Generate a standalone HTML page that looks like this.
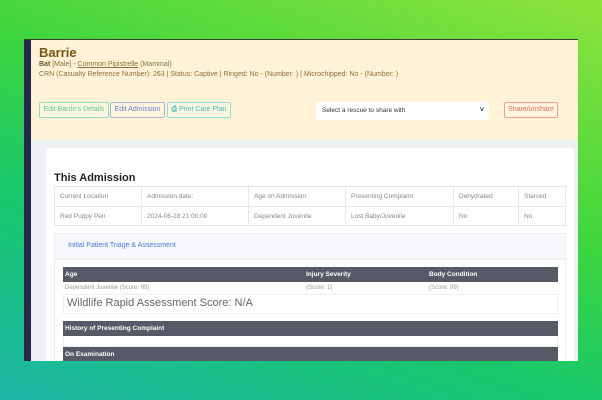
<!DOCTYPE html>
<html><head><style>
*{margin:0;padding:0;box-sizing:border-box}
body{width:602px;height:400px;overflow:hidden;font-family:"Liberation Sans",sans-serif;position:relative;
background:linear-gradient(20deg,#1cb6a6 0%,#19c86a 35%,#3fd63e 60%,#8ee33a 100%)}
.a{position:absolute}
.win{left:24px;top:39px;width:554px;height:322px;background:#eef0f4;overflow:hidden;border-top:1px solid #3a3f36}
.strip{left:0;top:0;width:7px;height:322px;background:#262a4a}
.hdr{left:7px;top:0;width:547px;height:100px;background:#fff2d6}
.t{font-size:7px;color:#8a7040;white-space:nowrap}
.btn{height:16px;border:1px solid #8fdcb8;border-radius:2px;font-size:7px;line-height:14px;text-align:center;color:#5cc9a0;background:#fff5e0;white-space:nowrap}
.card{left:22px;top:108px;width:528px;height:220px;background:#fff;border-radius:3px}
table{border-collapse:collapse;font-size:6.5px;color:#888}
td{border:1px solid #e8e8ec;padding:0 5px;white-space:nowrap}
.dk{background:#555a66;color:#fff;font-weight:bold;font-size:6.5px;padding-left:2px;line-height:15px}
</style></head><body>
<div class="a win">
 <div class="a strip"></div>
 <div class="a hdr">
  <div class="a" style="left:8px;top:5px;font-size:13px;font-weight:bold;color:#7a5518">Barrie</div>
  <div class="a t" style="left:8px;top:21px"><b style="color:#6a5528">Bat</b> [Male] - <u>Common Pipistrelle</u> (Mammal)</div>
  <div class="a t" style="left:8px;top:31px">CRN (Casualty Reference Number): 263 | Status: Captive | Ringed: No - (Number: ) | Microchipped: No - (Number: )</div>
  <div class="a btn" style="left:8px;top:62px;width:70px">Edit Barrie's Details</div>
  <div class="a btn" style="left:79px;top:62px;width:55px;border-color:#a8b4d0;color:#6a80c0">Edit Admission</div>
  <div class="a btn" style="left:136px;top:62px;width:64px;border-color:#8fdcd0;color:#3cbcc0"><b>&#9113;</b> Print Care Plan</div>
  <div class="a" style="left:285px;top:62px;width:173px;height:18px;background:#fff;border-radius:3px;font-size:6.5px;line-height:18px;padding-left:6px;color:#333">Select a rescue to share with<span style="position:absolute;right:5px;top:0;font-size:7px;font-weight:bold">&#709;</span></div>
  <div class="a btn" style="left:473px;top:62px;width:54px;border-color:#f0a090;color:#f06a5a">Share/unshare</div>
 </div>
 <div class="a card">
  <div class="a" style="left:8px;top:24px;font-size:11px;font-weight:bold;color:#222">This Admission</div>
  <table class="a" style="left:8px;top:38px;width:512px">
   <tr style="height:20px"><td style="width:87px">Current Location</td><td style="width:107px">Admission date:</td><td style="width:97px">Age on Admission:</td><td style="width:108px">Presenting Complaint</td><td style="width:65px">Dehydrated</td><td>Starved</td></tr>
   <tr style="height:19px"><td>Red Puppy Pen</td><td>2024-06-28 21:00:00</td><td>Dependent Juvenile</td><td>Lost Baby/Juvenile</td><td>No</td><td>No</td></tr>
  </table>
  <div class="a" style="left:8px;top:85px;width:512px;height:140px;border:1px solid #eceef2">
   <div style="height:26px;background:#f7f8fb;border-bottom:1px solid #eceef2;font-size:7px;color:#4a78d8;padding:8px 0 0 13px">Initial Patient Triage &amp; Assessment</div>
   <div class="a" style="left:8px;top:33px;width:495px">
    <div class="dk" style="position:relative">Age<span class="a" style="left:243px">Injury Severity</span><span class="a" style="left:366px">Body Condition</span></div>
    <div style="position:relative;height:13px;font-size:6px;color:#999;line-height:13px;padding-left:2px;border-bottom:1px solid #eee">Dependent Juvenile (Score: 99)<span class="a" style="left:243px">(Score: 1)</span><span class="a" style="left:366px">(Score: 99)</span></div>
    <div style="height:19px;font-size:11px;color:#666;padding-left:3px;line-height:17px;border:1px solid #eee;border-top:none">Wildlife Rapid Assessment Score: N/A</div>
    <div class="dk" style="margin-top:7px">History of Presenting Complaint</div>
    <div style="height:11px;border:1px solid #eee;border-top:none"></div>
    <div class="dk">On Examination</div>
   </div>
  </div>
 </div>
</div>
</body></html>
